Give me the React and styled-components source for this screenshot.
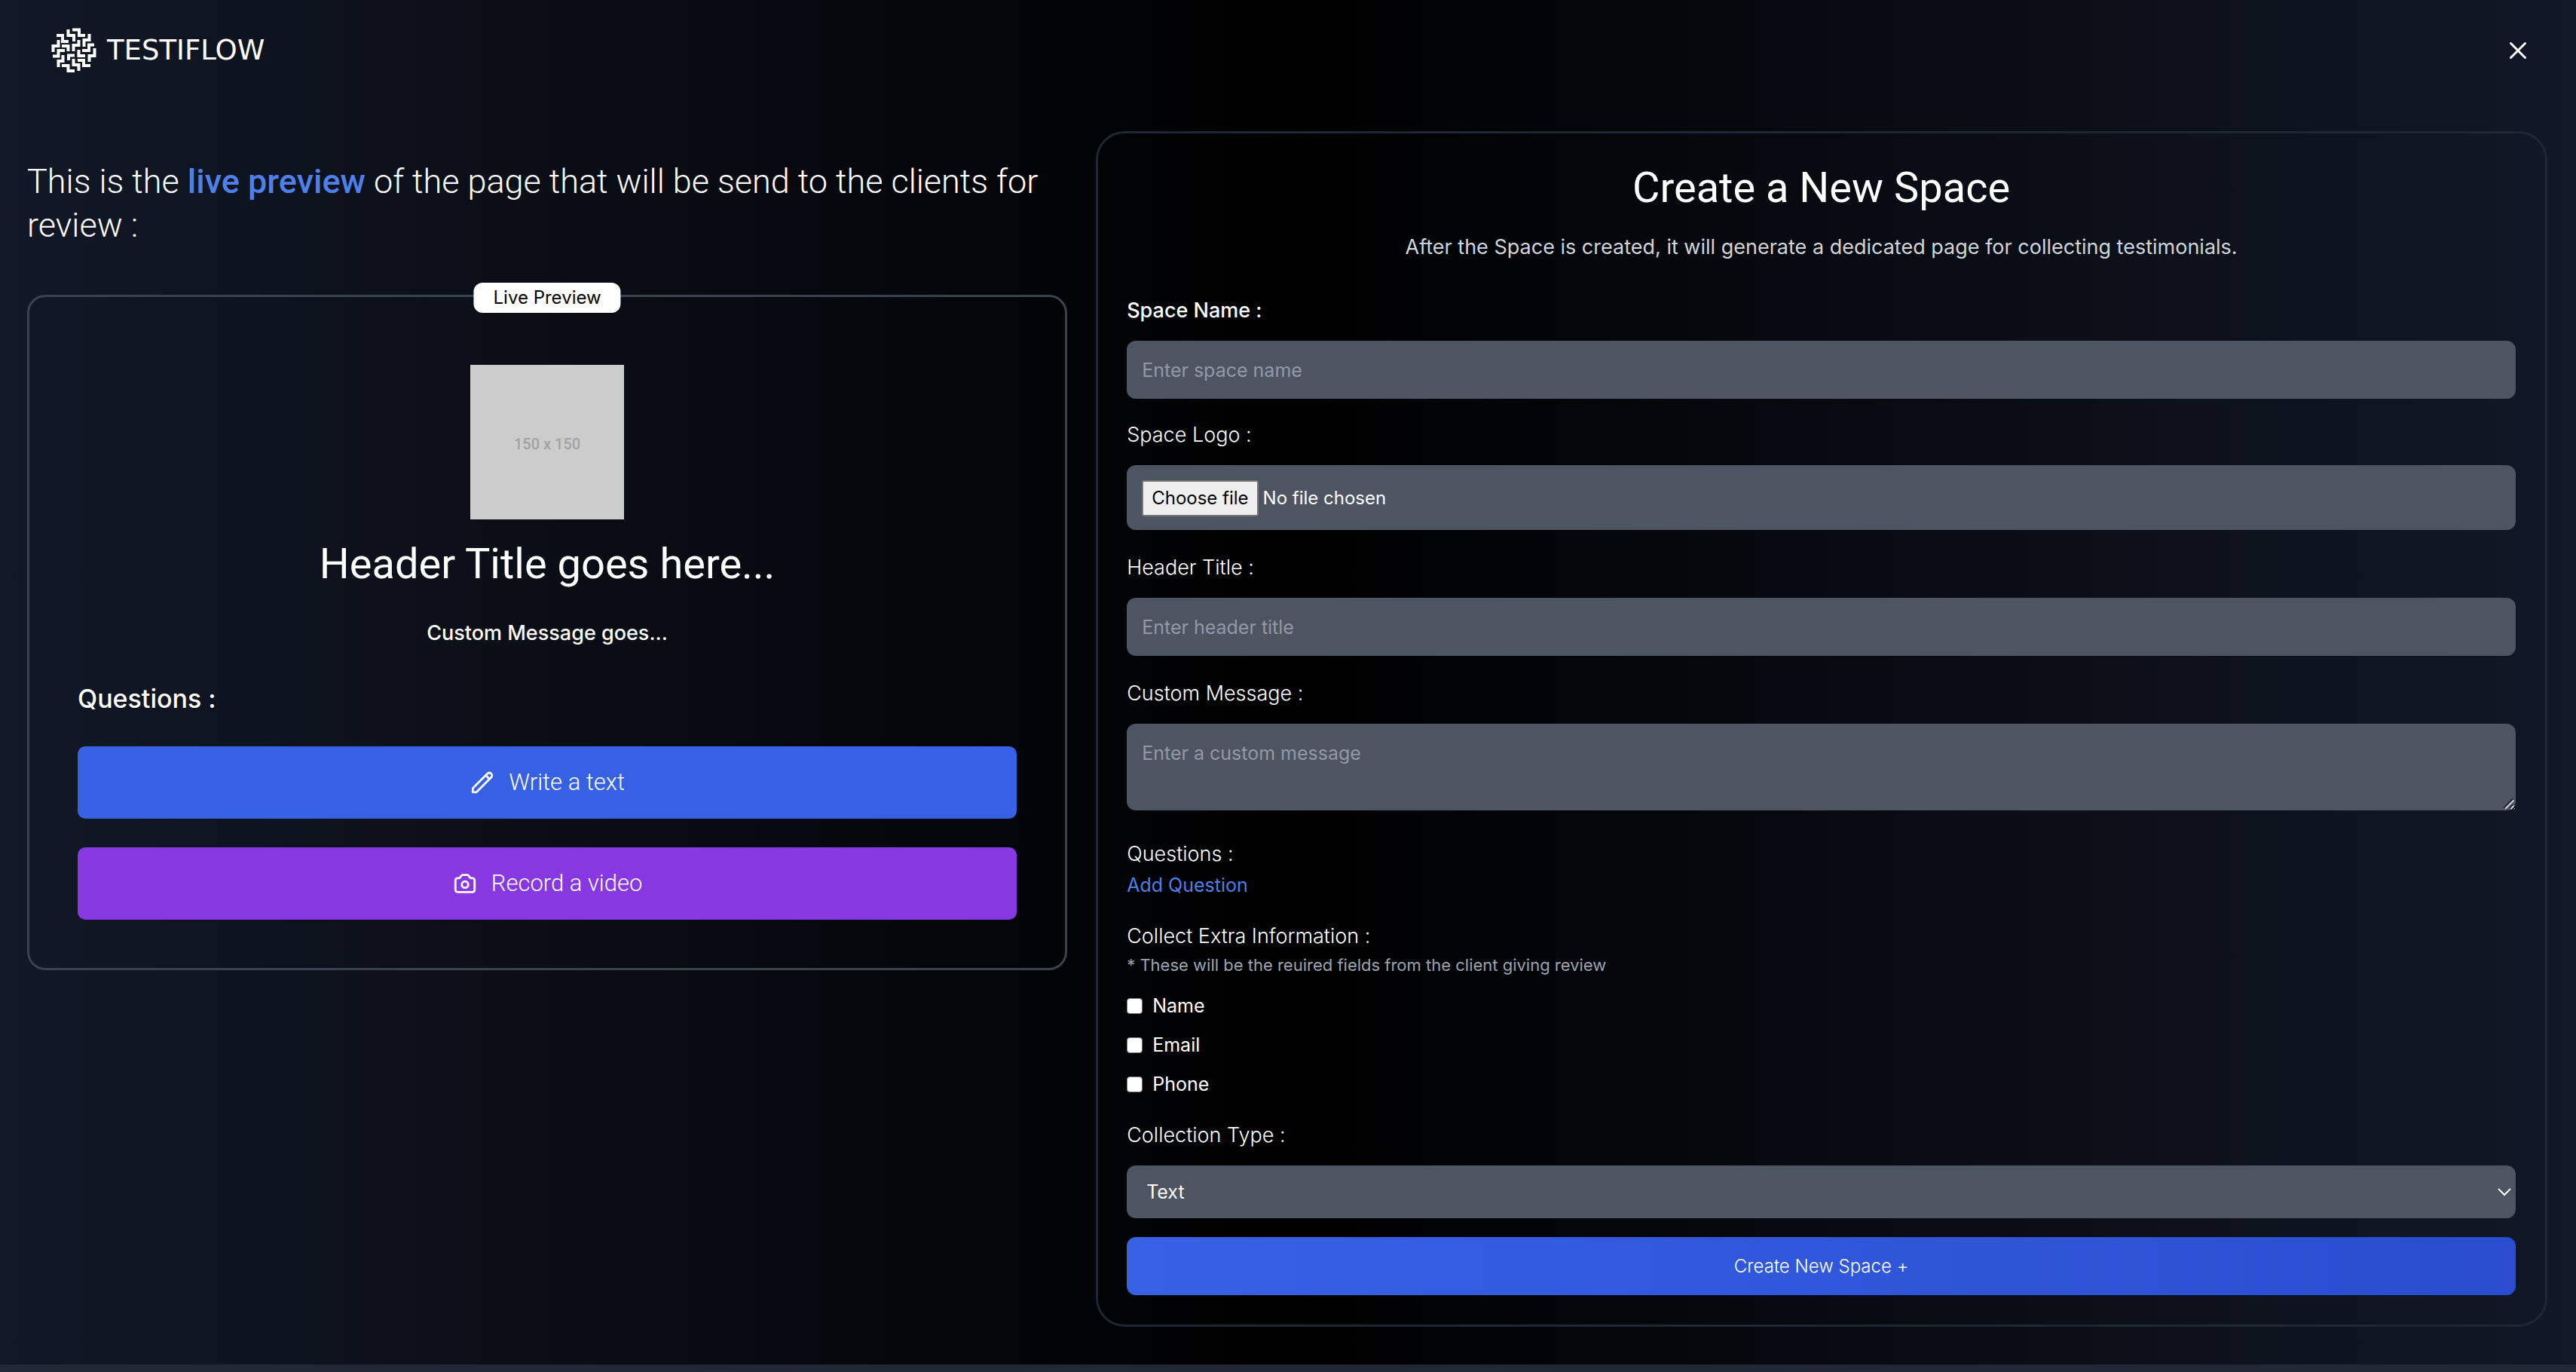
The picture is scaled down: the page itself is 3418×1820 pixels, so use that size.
import React, { useRef, useState } from "react";
import styled, { createGlobalStyle } from "styled-components";

const GlobalStyle = createGlobalStyle`
  *, *::before, *::after { box-sizing: border-box; }
  html { background: #212734; }
  body {
    margin: 0;
    color: #fff;
    font-family: Inter, "Liberation Sans", sans-serif;
    font-size: 25px;
    line-height: 36px;
  }
  h1, h2, h3, p { margin: 0; }
  button, input, textarea, select { font: inherit; color: inherit; border: 0; }
`;

const displayFont = `Roboto, "Liberation Sans", sans-serif`;

const Page = styled.div`
  background: linear-gradient(to right, #111827, #000, #111827);
  border-bottom: 9px solid #212734;
`;

const Header = styled.header`
  display: flex;
  align-items: center;
  justify-content: space-between;
  padding: 37px 62px 37px 68px;
`;

const Brand = styled.a`
  display: flex;
  align-items: center;
  gap: 14px;
  color: #fff;
  text-decoration: none;
  font-family: "DejaVu Sans", sans-serif;
  font-size: 37px;
  line-height: 60px;
`;

const CloseButton = styled.button`
  display: flex;
  padding: 0;
  background: none;
  cursor: pointer;
`;

const Columns = styled.main`
  display: grid;
  grid-template-columns: 43fr 60fr;
  align-items: start;
  gap: 38px;
  padding: 40px 38px 50px 36px;
`;

const PreviewColumn = styled.section`
  padding-top: 38px;
`;

const Intro = styled.h2`
  font-family: ${displayFont};
  font-size: 45px;
  line-height: 58px;
  font-weight: 300;
`;

const Accent = styled.span`
  color: #4f7fe8;
  font-weight: 500;
`;

const PreviewCard = styled.div`
  position: relative;
  display: flex;
  flex-direction: column;
  margin-top: 63px;
  padding: 90px 64px 64px;
  border: 3px solid #3a414f;
  border-radius: 24px;
`;

const Badge = styled.span`
  position: absolute;
  top: -19px;
  left: 50%;
  transform: translateX(-50%);
  padding: 0 26px;
  border-radius: 12px;
  background: #fff;
  color: #000;
  font-size: 24px;
  line-height: 40px;
`;

const LogoPlaceholder = styled.div`
  display: grid;
  place-items: center;
  align-self: center;
  width: 204px;
  height: 205px;
  padding-top: 4px;
  background: #ccc;
  color: #a2a2a2;
  font-family: Roboto, sans-serif;
  font-size: 20px;
  font-weight: 500;
`;

const Title = styled.h1`
  font-family: ${displayFont};
  font-size: 56px;
  line-height: 64px;
  font-weight: 400;
  text-align: center;
`;

const PreviewTitle = styled(Title)`
  margin-top: 27px;
`;

const PreviewMessage = styled.p`
  margin-top: 42px;
  font-size: 27px;
  font-weight: 500;
  text-align: center;
`;

const PreviewQuestions = styled.h3`
  margin-top: 45px;
  font-size: 34px;
  line-height: 48px;
  font-weight: 500;
`;

const Actions = styled.div`
  display: grid;
  gap: 38px;
  margin-top: 39px;
`;

const ActionButton = styled.button`
  display: flex;
  align-items: center;
  justify-content: center;
  gap: 18px;
  height: 96px;
  border-radius: 10px;
  background: ${(p) => p.$color};
  font-family: ${displayFont};
  font-size: 31px;
  font-weight: 300;
  cursor: pointer;
`;

const FormCard = styled.form`
  display: flex;
  flex-direction: column;
  padding: 40px 39px 39px 38px;
  border: 3px solid #1f2733;
  border-radius: 38px;
`;

const Subtitle = styled.p`
  margin-top: 29px;
  color: #d1d5db;
  font-size: 27px;
  text-align: center;
`;

const Field = styled.div`
  display: flex;
  flex-direction: column;
  margin-top: ${(p) => p.$top}px;
`;

const Label = styled.label`
  font-size: 27px;
  line-height: 36px;
  font-weight: ${(p) => (p.$strong ? 500 : 300)};
`;

const GroupTitle = styled.h3`
  font-size: 27px;
  line-height: 36px;
  font-weight: 300;
`;

const controlBox = `
  width: 100%;
  border-radius: 12px;
  background: #4d5562;
  &::placeholder { color: #9299a5; opacity: 1; }
`;

const TextInput = styled.input`
  ${controlBox}
  height: 77px;
  margin-top: 22px;
  padding: 0 20px;
`;

const TextAreaWrap = styled.div`
  display: grid;
  margin-top: 22px;
  & > * { grid-area: 1 / 1; }
  & > svg { place-self: end; pointer-events: none; }
`;

const TextArea = styled.textarea`
  ${controlBox}
  display: block;
  height: 115px;
  padding: 21px 20px;
  resize: vertical;
`;

const FileBox = styled.div`
  ${controlBox}
  display: flex;
  align-items: center;
  gap: 6px;
  height: 86px;
  margin-top: 22px;
  padding: 2px 20px 0;
  font-size: 24px;
`;

const HiddenFile = styled.input`
  position: absolute;
  width: 1px;
  height: 1px;
  opacity: 0;
`;

const FileButton = styled.button`
  padding: 0 11px;
  border: 2px solid #767676;
  border-radius: 3px;
  background: #efefef;
  color: #000;
  line-height: 44px;
`;

const LinkButton = styled.button`
  align-self: flex-start;
  margin-top: 5px;
  padding: 0;
  background: none;
  color: #4f7fe8;
  cursor: pointer;
`;

const Note = styled.p`
  margin-top: 2px;
  color: #9ca3af;
  font-size: 22px;
`;

const Checks = styled.div`
  display: grid;
  gap: 16px;
  margin-top: 18px;
`;

const CheckRow = styled.div`
  display: flex;
  align-items: center;
  gap: 13px;
`;

const Check = styled.input`
  appearance: none;
  width: 21px;
  height: 21px;
  margin: 0;
  border: 1px solid #767676;
  border-radius: 4px;
  background: #fff;
  &:checked { background: #3761e3; }
`;

const SelectWrap = styled.div`
  display: grid;
  align-items: center;
  margin-top: 22px;
  border-radius: 12px;
  background: #4d5562;
  & > * { grid-area: 1 / 1; }
  & > svg { justify-self: end; margin-right: 6px; pointer-events: none; }
`;

const Select = styled.select`
  appearance: none;
  width: 100%;
  height: 70px;
  padding: 0 26px;
  border-radius: 12px;
  background: transparent;
`;

const Submit = styled.button`
  height: 77px;
  margin-top: 25px;
  border-radius: 12px;
  background: linear-gradient(to right, #3761e3, #2a4dd0);
  font-size: 24px;
  font-weight: 300;
  cursor: pointer;
`;

const LOGO_STROKES = [
  "M28 2.5H37V10H45",
  "M22.5 2V10H30V18",
  "M7 10H15V18H23",
  "M50.500 8V16H43.500V25",
  "M9.500 16V24H2.500V32",
  "M14 24H22.500V31",
  "M36.500 16V23H29.500V31",
  "M57 22.500H50V30H41",
  "M2 37.500H9.500V30H18",
  "M57.500 27V37H50.500V45",
  "M15.500 36V44H9.500V52",
  "M23 43V36.500H31",
  "M36.500 29V37H45",
  "M14 50H22.500V57H31",
  "M29.500 41V49H36.500V57",
  "M35 43H43V50H52",
];

const LogoMark = () => (
  <svg width="60" height="60" viewBox="0 0 60 60" fill="none" stroke="#fff" strokeWidth="4" aria-hidden="true">
    {LOGO_STROKES.map((d) => (
      <path key={d} d={d} />
    ))}
  </svg>
);

const CloseIcon = () => (
  <svg width="30" height="30" viewBox="0 0 30 30" fill="none" stroke="#fff" strokeWidth="3" strokeLinecap="round" aria-hidden="true">
    <path d="M5.500 5.500l19 19M24.500 5.500l-19 19" />
  </svg>
);

const PencilIcon = () => (
  <svg width="34" height="34" viewBox="0 0 24 24" fill="none" stroke="#fff" strokeWidth="2" strokeLinecap="round" strokeLinejoin="round" aria-hidden="true">
    <path d="M15.232 5.232l3.536 3.536m-2.036-5.036a2.500 2.500 0 113.536 3.536L6.500 21.036H3v-3.572L16.732 3.732z" />
  </svg>
);

const CameraIcon = () => (
  <svg width="34" height="34" viewBox="0 0 24 24" fill="none" stroke="#fff" strokeWidth="2" strokeLinecap="round" strokeLinejoin="round" aria-hidden="true">
    <path d="M3 9a2 2 0 012-2h.93a2 2 0 001.664-.89l.812-1.220A2 2 0 0110.070 4h3.860a2 2 0 011.664.89l.812 1.220A2 2 0 0018.070 7H19a2 2 0 012 2v9a2 2 0 01-2 2H5a2 2 0 01-2-2V9z" />
    <circle cx="12" cy="13" r="3" />
  </svg>
);

const Chevron = () => (
  <svg width="18" height="12" viewBox="0 0 18 12" fill="none" stroke="#fff" strokeWidth="2" aria-hidden="true">
    <path d="M1 2l8 8 8-8" />
  </svg>
);

const ResizeGrip = () => (
  <svg width="18" height="18" viewBox="0 0 18 18" fill="none" aria-hidden="true">
    <path d="M3 15.500L15 3.500M11 15.500l4-4" stroke="#1f2430" strokeWidth="4" />
    <path d="M4 16L15.500 4.500M11.500 16l4-4" stroke="#d5d7da" strokeWidth="2" />
  </svg>
);

const EXTRA_FIELDS = ["Name", "Email", "Phone"];

export default function App() {
  const fileRef = useRef(null);
  const [fileName, setFileName] = useState("No file chosen");

  return (
    <>
      <GlobalStyle />
      <Page>
        <Header>
          <Brand href="#">
            <LogoMark />
            TESTIFLOW
          </Brand>
          <CloseButton type="button" aria-label="Close">
            <CloseIcon />
          </CloseButton>
        </Header>
        <Columns>
          <PreviewColumn>
            <Intro>
              This is the <Accent>live preview</Accent> of the page that will be send to the clients for review :
            </Intro>
            <PreviewCard>
              <Badge>Live Preview</Badge>
              <LogoPlaceholder>150 x 150</LogoPlaceholder>
              <PreviewTitle as="h2">Header Title goes here...</PreviewTitle>
              <PreviewMessage>Custom Message goes...</PreviewMessage>
              <PreviewQuestions>Questions :</PreviewQuestions>
              <Actions>
                <ActionButton type="button" $color="#3761e3">
                  <PencilIcon />
                  Write a text
                </ActionButton>
                <ActionButton type="button" $color="#8838e0">
                  <CameraIcon />
                  Record a video
                </ActionButton>
              </Actions>
            </PreviewCard>
          </PreviewColumn>

          <FormCard onSubmit={(e) => e.preventDefault()}>
            <Title>Create a New Space</Title>
            <Subtitle>
              After the Space is created, it will generate a dedicated page for collecting testimonials.
            </Subtitle>
            <Field $top={48}>
              <Label htmlFor="space-name" $strong>Space Name :</Label>
              <TextInput id="space-name" type="text" placeholder="Enter space name" />
            </Field>
            <Field $top={30}>
              <Label htmlFor="space-logo">Space Logo :</Label>
              <FileBox>
                <HiddenFile
                  id="space-logo"
                  ref={fileRef}
                  type="file"
                  tabIndex={-1}
                  onChange={(e) => setFileName(e.target.files[0]?.name ?? "No file chosen")}
                />
                <FileButton type="button" onClick={() => fileRef.current.click()}>Choose file</FileButton>
                <span>{fileName}</span>
              </FileBox>
            </Field>
            <Field $top={32}>
              <Label htmlFor="header-title">Header Title :</Label>
              <TextInput id="header-title" type="text" placeholder="Enter header title" />
            </Field>
            <Field $top={32}>
              <Label htmlFor="custom-message">Custom Message :</Label>
              <TextAreaWrap>
                <TextArea id="custom-message" placeholder="Enter a custom message" />
                <ResizeGrip />
              </TextAreaWrap>
            </Field>
            <Field $top={40}>
              <GroupTitle>Questions :</GroupTitle>
              <LinkButton type="button">Add Question</LinkButton>
            </Field>
            <Field $top={32}>
              <GroupTitle>Collect Extra Information :</GroupTitle>
              <Note>* These will be the reuired fields from the client giving review</Note>
              <Checks>
                {EXTRA_FIELDS.map((name) => (
                  <CheckRow key={name}>
                    <Check type="checkbox" id={`extra-${name}`} />
                    <label htmlFor={`extra-${name}`}>{name}</label>
                  </CheckRow>
                ))}
              </Checks>
            </Field>
            <Field $top={32}>
              <Label htmlFor="collection-type">Collection Type :</Label>
              <SelectWrap>
                <Select id="collection-type" defaultValue="text">
                  <option value="text">Text</option>
                </Select>
                <Chevron />
              </SelectWrap>
            </Field>
            <Submit type="submit">Create New Space +</Submit>
          </FormCard>
        </Columns>
      </Page>
    </>
  );
}
